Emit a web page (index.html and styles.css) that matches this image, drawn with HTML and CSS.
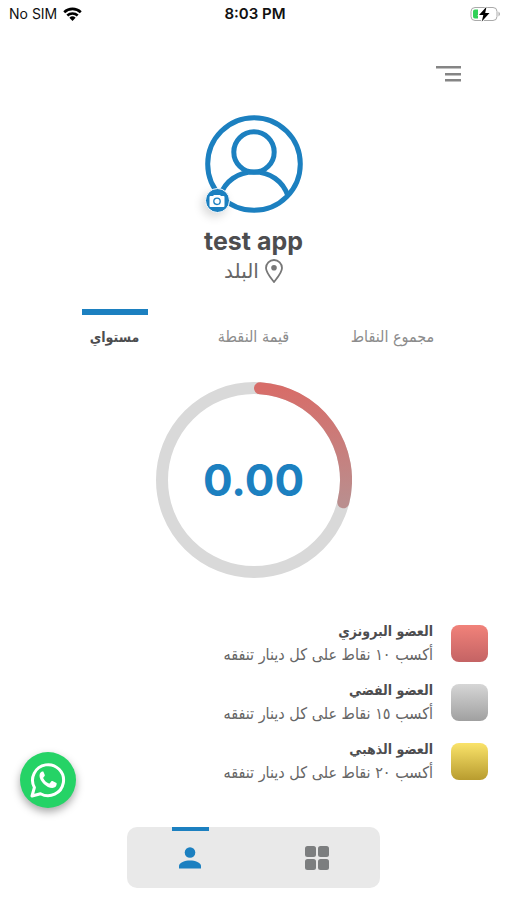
FILE: index.html
```html
<!DOCTYPE html>
<html lang="ar" dir="rtl">
<head>
<meta charset="utf-8">
<meta name="viewport" content="width=device-width, initial-scale=1">
<title>test app</title>
<link rel="stylesheet" href="styles.css">
</head>
<body>
<div class="app">
  <div class="status" dir="ltr">
    <div class="carrier"><span>No SIM</span>
      <svg width="19" height="14" viewBox="0 0 19 14" fill="none" stroke="#000" stroke-width="2.6"><path d="M1.2 5.2a12 12 0 0 1 16.6 0M4.3 8.5a7.6 7.6 0 0 1 10.4 0"/><path d="M9.5 14 6.4 10.8a4.5 4.5 0 0 1 6.2 0z" fill="#000" stroke="none"/></svg>
    </div>
    <span class="time">8:03 PM</span>
    <svg class="battery" width="31" height="16" viewBox="0 0 31 16"><rect x="1" y="1.5" width="26" height="13" rx="4" fill="#fff" stroke="#aaa"/><path d="M28.5 5.5q3 2.500 0 5z" fill="#aaa"/><path d="M5 3.500h3v9H5a2 2 0 0 1-2-2v-5a2 2 0 0 1 2-2z" fill="#30d158"/><path d="M16.500.8 9 9h4.300l-1.500 6.500L19.500 7h-4.300z" fill="#000" stroke="#fff" stroke-width="1.600" paint-order="stroke"/></svg>
  </div>

  <header class="top">
    <button class="menu" type="button" aria-label="القائمة">
      <svg width="26" height="18" viewBox="0 0 26 18" fill="#858585"><path d="M0 1h25v2.500H0zM9 8h16v2.500H9zM9 14h16v2.500H9z"/></svg>
    </button>
  </header>

  <section class="profile">
    <div class="avatar">
      <svg width="98" height="98" viewBox="0 0 98 98" fill="none" stroke="#1c80c0" stroke-width="5"><circle cx="49" cy="49" r="46.300"/><circle cx="49" cy="37" r="20.200"/><path d="M15 81C20 66 33 57 49 57s29 9 34 24"/></svg>
      <button class="camera" type="button" aria-label="تغيير الصورة">
        <svg width="16" height="14" viewBox="0 0 16 14"><path d="M1.500 2H4l1-1h6l1 1h2.500a1 1 0 0 1 1 1v9a1 1 0 0 1-1 1h-13a1 1 0 0 1-1-1V3a1 1 0 0 1 1-1z" fill="#fff"/><circle cx="8" cy="7.300" r="3.200" fill="none" stroke="#1c80c0" stroke-width="1.300"/></svg>
      </button>
    </div>
    <h1 class="name" dir="ltr">test app</h1>
    <p class="place">
      <svg width="18" height="24" viewBox="0 0 18 24" fill="none" stroke="#777" stroke-width="1.800"><path d="M9 23C5.500 18.500 1 13.500 1 9a8 8 0 0 1 16 0c0 4.500-4.500 9.500-8 14z"/><circle cx="9" cy="8.800" r="2.800" fill="#777" stroke="none"/></svg>
      <span>البلد</span>
    </p>
  </section>

  <nav class="tabs">
    <button type="button" class="tab">مجموع النقاط</button>
    <button type="button" class="tab">قيمة النقطة</button>
    <button type="button" class="tab tab-active">مستواي</button>
  </nav>

  <section class="gauge">
    <svg width="196" height="196" viewBox="0 0 196 196" fill="none" stroke-width="12">
      <defs><linearGradient id="level" x1="0" y1="0" x2="0" y2="1"><stop offset="0" stop-color="#d76d69"/><stop offset="1" stop-color="#ba8e8e"/></linearGradient></defs>
      <circle cx="98" cy="98" r="92" stroke="#d9d9d9"/>
      <path d="M104 6.200A92 92 0 0 1 187.300 120.300" stroke="url(#level)" stroke-linecap="round"/>
    </svg>
    <strong class="score">0.00</strong>
  </section>

  <ul class="levels">
    <li class="level"><span class="swatch bronze"></span><div><h2>العضو البرونزي</h2><p>أكسب ١٠ نقاط على كل دينار تنفقه</p></div></li>
    <li class="level"><span class="swatch silver"></span><div><h2>العضو الفضي</h2><p>أكسب ١٥ نقاط على كل دينار تنفقه</p></div></li>
    <li class="level"><span class="swatch gold"></span><div><h2>العضو الذهبي</h2><p>أكسب ٢٠ نقاط على كل دينار تنفقه</p></div></li>
  </ul>

  <nav class="dock">
    <a class="dock-item" href="#home" aria-label="الرئيسية">
      <svg width="24" height="24" viewBox="0 0 24 24" fill="#7c7e7f"><rect width="11" height="11" rx="2.500"/><rect x="13" width="11" height="11" rx="2.500"/><rect y="13" width="11" height="11" rx="2.500"/><rect x="13" y="13" width="11" height="11" rx="2.500"/></svg>
    </a>
    <a class="dock-item dock-active" href="#profile" aria-label="حسابي">
      <svg width="22" height="22" viewBox="0 0 22 22" fill="#1c80c0"><circle cx="11" cy="5.500" r="5.300"/><path d="M0 21.500v-2.500c0-3.500 6-5.500 11-5.500s11 2 11 5.500v2.500z"/></svg>
    </a>
  </nav>

  <a class="whatsapp" href="#whatsapp" aria-label="واتساب">
    <svg width="36" height="36" viewBox="0 0 36 36"><path d="M2 34l2.400-8.500A15.500 15.500 0 1 1 10.500 31.700z" fill="none" stroke="#fff" stroke-width="3" stroke-linejoin="round"/><path d="M12.300 9.500c-.7 0-2.800 1.200-2.800 4.200 0 5.500 7.200 12.300 12.800 12.300 3 0 4.400-2 4.400-4.200 0-.6-.3-.8-.7-1l-3.500-1.700c-.6-.2-.9-.1-1.300.4l-1.400 1.700c-.4.400-.8.400-1.300.1-2-1-4-2.700-5.100-4.900-.3-.5-.2-.8.200-1.200l1-1.300c.3-.4.300-.7.100-1.200l-1.400-3.200z" fill="#fff"/></svg>
  </a>
</div>
</body>
</html>
```
FILE: styles.css
```css
* { box-sizing: border-box; }
body {
  margin: 0;
  background: #fff;
  color: #4d4d4f;
  font-family: Inter, "DejaVu Sans", sans-serif;
}
h1, h2, p, ul { margin: 0; padding: 0; }
button { padding: 0; border: 0; background: none; font: inherit; }
svg { display: block; }
.app {
  min-height: 100vh;
  padding-bottom: 12px;
  display: flex;
  flex-direction: column;
}
.status {
  height: 27px;
  padding: 0 6px 0 9px;
  display: grid;
  grid-template-columns: 1fr auto 1fr;
  align-items: center;
  color: #111;
  font-size: 14px;
}
.carrier { display: flex; align-items: center; gap: 6px; }
.time { font-size: 15px; font-weight: 600; }
.battery { justify-self: end; }
.top { padding: 38px 45px 0; }
.menu { display: block; }
.profile {
  padding-top: 32px;
  display: flex;
  flex-direction: column;
  align-items: center;
}
.avatar { position: relative; }
.camera {
  position: absolute;
  left: 0;
  bottom: 0;
  width: 25px;
  height: 25px;
  display: grid;
  place-items: center;
  border: 1px solid #fff;
  border-radius: 50%;
  background: #1c80c0;
  box-shadow: -3px 4px 10px rgba(0, 0, 0, 0.15);
}
.name { padding-top: 12px; font-size: 25px; line-height: 32px; font-weight: 700; }
.place {
  display: flex;
  align-items: center;
  gap: 6px;
  font-size: 20px;
  line-height: 28px;
  color: #666;
}
.tabs, .levels { font-family: "DejaVu Sans Condensed", "DejaVu Sans", sans-serif; }
.tabs {
  margin: 24px 45px 0;
  display: grid;
  grid-template-columns: repeat(3, 1fr);
}
.tab {
  justify-self: center;
  min-width: 66px;
  height: 40px;
  padding-top: 10px;
  border-top: 6px solid transparent;
  font-size: 16px;
  line-height: 24px;
  color: #8c8c8c;
}
.tab-active { border-color: #1c80c0; color: #4d4d4f; font-size: 14px; font-weight: 700; }
.gauge { padding-top: 33px; display: grid; place-items: center; }
.gauge > * { grid-area: 1 / 1; }
.score { color: #1c80c0; font-size: 44px; line-height: 56px; font-weight: 700; }
.levels {
  margin: 42px 19px 0;
  display: flex;
  flex-direction: column;
  gap: 12px;
  list-style: none;
}
.level { display: flex; align-items: center; gap: 18px; }
.level h2 { font-size: 14px; line-height: 23px; font-weight: 700; }
.level p { font-size: 16px; line-height: 24px; color: #666; }
.swatch { width: 37px; height: 37px; border-radius: 8px; }
.bronze { background: linear-gradient(#f1827a, #c46364); }
.silver { background: linear-gradient(#d6d6d6, #a0a0a0); }
.gold { background: linear-gradient(#fae36a, #b89c2f); }
.dock {
  width: 50%;
  height: 61px;
  margin: auto auto 0;
  display: grid;
  grid-template-columns: 1fr 1fr;
  border-radius: 10px;
  background: #e9e9e9;
}
.dock-item {
  justify-self: center;
  width: 37px;
  padding-bottom: 4px;
  border-top: 4px solid transparent;
  display: grid;
  place-items: center;
}
.dock-active { border-color: #1c80c0; }
.whatsapp {
  position: fixed;
  left: 20px;
  bottom: 92px;
  width: 56px;
  height: 56px;
  display: grid;
  place-items: center;
  border-radius: 50%;
  background: #25d366;
  box-shadow: 0 4px 9px rgba(0, 0, 0, 0.35);
}
```
